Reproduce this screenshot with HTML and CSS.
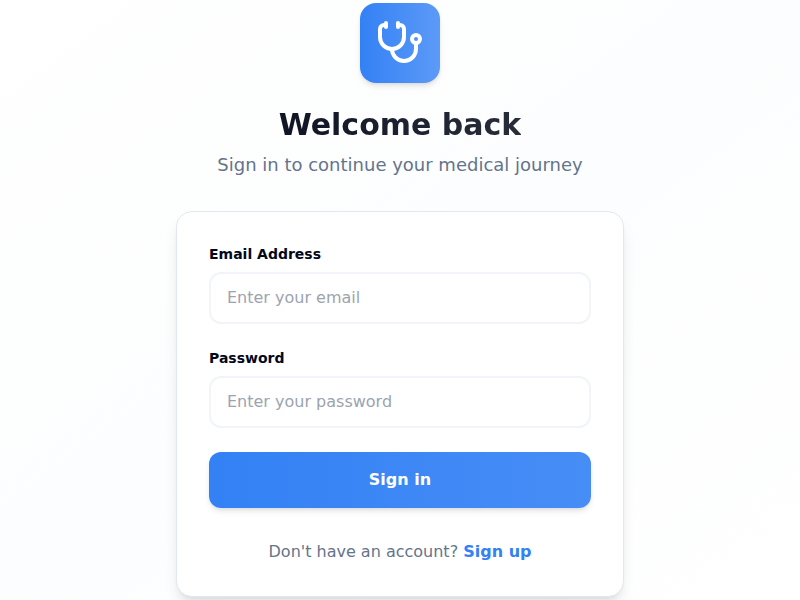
FILE: index.html
```html
<!DOCTYPE html>
<html lang="en">
<head>
<meta charset="utf-8">
<title>Sign in</title>
<link rel="stylesheet" href="styles.css">
</head>
<body>
<main class="page">
  <header class="intro">
    <div class="logo">
      <svg viewBox="0 0 24 24" width="48" height="48" fill="none" stroke="currentColor" stroke-width="2" stroke-linecap="round" stroke-linejoin="round">
        <path d="M11 2v2"/><path d="M5 2v2"/>
        <path d="M5 3H4a2 2 0 0 0-2 2v4a6 6 0 0 0 12 0V5a2 2 0 0 0-2-2h-1"/>
        <path d="M8 15a6 6 0 0 0 12 0v-3"/><circle cx="20" cy="10" r="2"/>
      </svg>
    </div>
    <h1 class="title">Welcome back</h1>
    <p class="subtitle">Sign in to continue your medical journey</p>
  </header>
  <section class="card">
    <form class="form">
      <div class="field">
        <label class="label" for="email">Email Address</label>
        <input class="input" id="email" type="email" placeholder="Enter your email">
      </div>
      <div class="field">
        <label class="label" for="password">Password</label>
        <input class="input" id="password" type="password" placeholder="Enter your password">
      </div>
      <button class="submit" type="button">Sign in</button>
    </form>
    <p class="signup">Don't have an account? <a class="link" href="#">Sign up</a></p>
  </section>
</main>
</body>
</html>
```
FILE: styles.css
```css
*, *::before, *::after { box-sizing: border-box; }
html, body { height: 100%; margin: 0; }
body {
  overflow: hidden;
  font-family: "DejaVu Sans", sans-serif;
  font-size: 16px;
  line-height: 24px;
  color: #020817;
  background: #fff;
}
.page {
  height: 600px;
  display: flex;
  flex-direction: column;
  align-items: center;
  justify-content: center;
  background: linear-gradient(to bottom right, #fff, rgba(241,245,249,.2), #fff);
}
.intro {
  display: flex;
  flex-direction: column;
  align-items: center;
  margin-bottom: 32px;
}
.logo {
  display: flex;
  align-items: center;
  justify-content: center;
  width: 80px;
  height: 80px;
  margin-bottom: 24px;
  border-radius: 16px;
  color: #fff;
  background: linear-gradient(to right, #3381f5, #5c9af7);
  box-shadow: 0 4px 6px -1px rgba(0,0,0,.1), 0 2px 4px -2px rgba(0,0,0,.1);
}
.title {
  margin: 0 0 8px;
  font-size: 30px;
  line-height: 36px;
  font-weight: 700;
  color: transparent;
  background: linear-gradient(to right, #0f1524, #272d39);
  background-clip: text;
  -webkit-background-clip: text;
}
.subtitle {
  margin: 0;
  font-size: 18px;
  line-height: 28px;
  color: #64748b;
}
.card {
  width: 448px;
  padding: 32px;
  border: 1px solid #e2e8f0;
  border-radius: 16px;
  background: #fff;
  box-shadow: 0 10px 15px -3px rgba(0,0,0,.1), 0 4px 6px -4px rgba(0,0,0,.1);
}
.form { display: flex; flex-direction: column; gap: 24px; }
.field { display: flex; flex-direction: column; gap: 8px; }
.label { font-size: 14px; line-height: 20px; font-weight: 600; }
.input {
  width: 100%;
  height: 52px;
  padding: 0 16px 1px;
  border: 2px solid #f1f5f9;
  border-radius: 12px;
  outline: none;
  background: #fff;
  font: inherit;
}
.input::placeholder { color: #9ca3af; opacity: 1; }
.submit {
  height: 56px;
  border: 0;
  border-radius: 12px;
  color: #fff;
  background: linear-gradient(to right, #3381f5, #478df6);
  box-shadow: 0 4px 6px -1px rgba(0,0,0,.1), 0 2px 4px -2px rgba(0,0,0,.1);
  font: inherit;
  font-weight: 600;
}
.signup { margin: 32px 0 0; text-align: center; color: #64748b; }
.link { color: #3381f5; font-weight: 600; text-decoration: none; }
```
